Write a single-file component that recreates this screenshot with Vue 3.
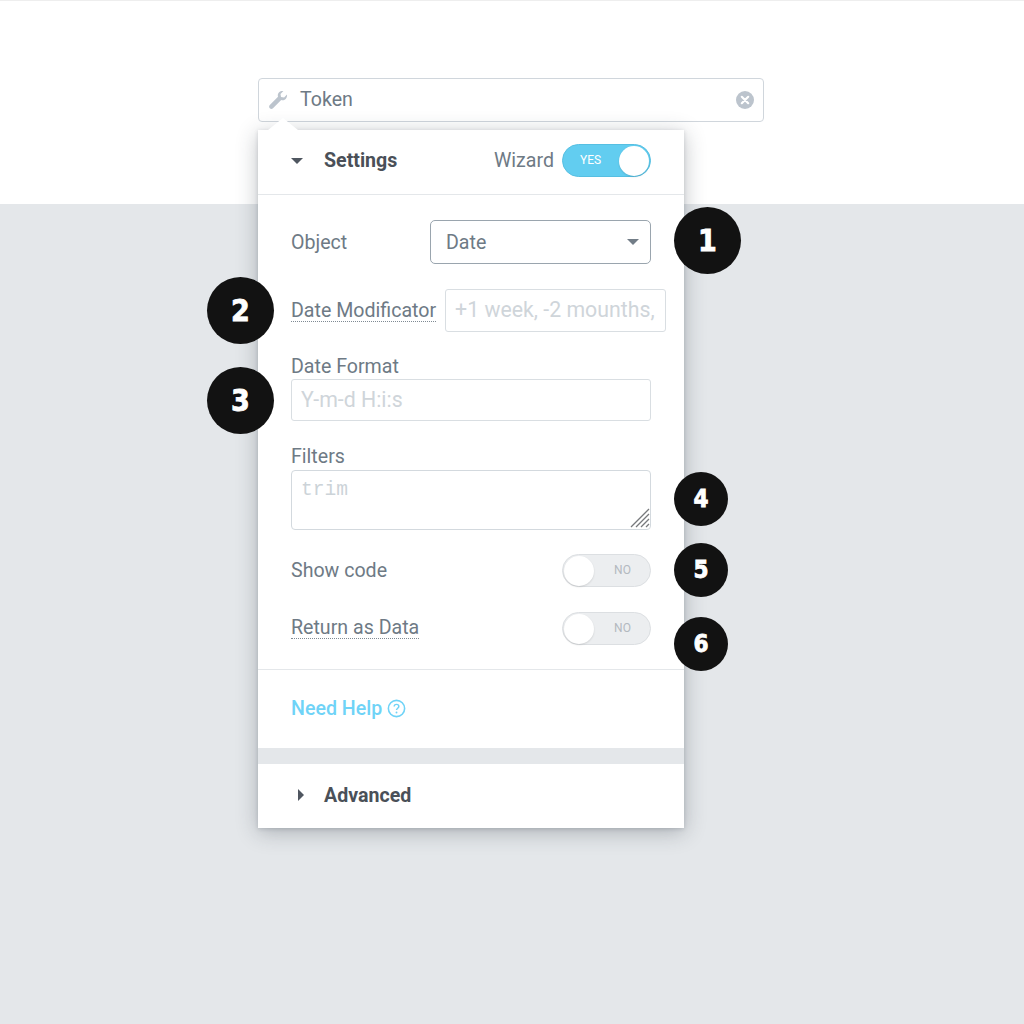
<script setup>
const badges = [
  { n: 1, cls: 'big b1' },
  { n: 2, cls: 'big b2' },
  { n: 3, cls: 'big b3' },
  { n: 4, cls: 'small b4' },
  { n: 5, cls: 'small b5' },
  { n: 6, cls: 'small b6' }
]
</script>

<template>
  <div class="stage">
    <div class="token">
      <svg class="wrench" width="20" height="20" viewBox="0 0 20 20">
        <path d="M19 4.600c.3 1.600-.2 3.200-1.300 4.300-1.200 1.200-2.900 1.600-4.500 1.100L5 18.200c-.9.900-2.300.900-3.200 0s-.9-2.300 0-3.200L10 6.800C9.500 5.200 9.900 3.500 11.100 2.300 12.200 1.200 13.800.7 15.400 1L12.500 3.900l.5 3.100 3.100.5L19 4.600z" fill="#bcc4cd" />
      </svg>
      <span class="token-name">Token</span>
      <svg class="clear" width="18" height="18" viewBox="0 0 18 18">
        <circle cx="9" cy="9" r="9" fill="#bcc4cd" />
        <path d="M5.800 5.800l6.400 6.400M12.200 5.800l-6.400 6.400" stroke="#fff" stroke-width="2.200" stroke-linecap="round" />
      </svg>
    </div>

    <div class="panel">
      <span class="notch"></span>

      <div class="head">
        <span class="caret-down"></span>
        <span class="title">Settings</span>
        <span class="wizard">Wizard</span>
        <div class="toggle on">
          <span class="toggle-text">YES</span>
          <span class="knob"></span>
        </div>
      </div>

      <div class="body">
        <div class="row object-row">
          <span class="label">Object</span>
          <div class="select">
            <span>Date</span>
            <span class="select-caret"></span>
          </div>
        </div>

        <div class="row modif-row">
          <span class="label dotted">Date Modificator</span>
          <input class="input modif" placeholder="+1 week, -2 mounths," />
        </div>

        <div class="stack format">
          <span class="label">Date Format</span>
          <input class="input" placeholder="Y-m-d H:i:s" />
        </div>

        <div class="stack filters">
          <span class="label">Filters</span>
          <div class="area-wrap">
            <textarea class="area" placeholder="trim"></textarea>
            <svg class="grip" width="20" height="20" viewBox="0 0 20 20">
              <path d="M1 19L19 1M6 19L19 6M11 19l8-8M16 19l3-3" stroke="#77797c" stroke-width="1.300" fill="none" />
            </svg>
          </div>
        </div>

        <div class="row switch-row code">
          <span class="label">Show code</span>
          <div class="toggle">
            <span class="knob"></span>
            <span class="toggle-text">NO</span>
          </div>
        </div>

        <div class="row switch-row data">
          <span class="label dotted">Return as Data</span>
          <div class="toggle">
            <span class="knob"></span>
            <span class="toggle-text">NO</span>
          </div>
        </div>
      </div>

      <div class="help">
        <span>Need Help</span>
        <svg width="19" height="19" viewBox="0 0 18 18">
          <circle cx="9" cy="9" r="7.700" fill="none" stroke="#6fd3f7" stroke-width="1.500" />
          <path d="M6.800 7.200c0-1.300 1-2.100 2.200-2.100s2.200.8 2.200 2c0 1.700-2.200 1.700-2.200 3.400" fill="none" stroke="#6fd3f7" stroke-width="1.400" />
          <circle cx="9" cy="12.800" r=".9" fill="#6fd3f7" />
        </svg>
      </div>

      <div class="advanced">
        <span class="caret-right"></span>
        <span class="title">Advanced</span>
      </div>
    </div>

    <span v-for="b in badges" :key="b.n" class="badge" :class="b.cls">{{ b.n }}</span>
  </div>
</template>

<style>
  body {
    margin: 0;
    background: #e4e7ea;
  }
</style>

<style scoped>
  .stage {
    position: relative;
    box-sizing: border-box;
    height: 1024px;
    padding: 78px 0 0 258px;
    background: linear-gradient(#eee 1px, #fff 1px, #fff 204px, #e4e7ea 204px);
    font-family: Roboto, sans-serif;
    font-size: 19.600px;
    color: #6e7a85;
    overflow: hidden;
  }

  .token {
    box-sizing: border-box;
    width: 506px;
    height: 44px;
    padding: 0 9px 1px;
    display: flex;
    align-items: center;
    border: 1px solid #d0d6dc;
    border-radius: 4px;
    background: #fff;
  }

  .wrench {
    flex: none;
  }

  .token-name {
    margin-left: 12px;
    color: #6e7a85;
  }

  .clear {
    margin-left: auto;
  }

  .panel {
    position: relative;
    width: 426px;
    margin-top: 8px;
    background: #fff;
    box-shadow: 0 4px 20px rgba(40, 50, 60, 0.3), 0 1px 4px rgba(40, 50, 60, 0.16);
  }

  .notch {
    position: absolute;
    left: 10px;
    top: -12px;
    width: 0;
    height: 0;
    border-left: 15px solid transparent;
    border-right: 15px solid transparent;
    border-bottom: 12px solid #fff;
  }

  .head {
    box-sizing: border-box;
    height: 65px;
    padding: 0 33px 3px;
    display: flex;
    align-items: center;
    border-bottom: 1px solid #e4e7ea;
  }

  .caret-down {
    width: 0;
    height: 0;
    border-left: 6px solid transparent;
    border-right: 6px solid transparent;
    border-top: 6px solid #4f5660;
  }

  .title {
    margin-left: 21px;
    font-weight: 700;
    color: #4a5058;
  }

  .wizard {
    margin-left: auto;
    margin-right: 8px;
  }

  .toggle {
    box-sizing: border-box;
    width: 89px;
    height: 33px;
    padding: 0 1px;
    display: flex;
    align-items: center;
    justify-content: space-between;
    border: 1px solid #dcdfe2;
    border-radius: 17px;
    background: #eceef0;
  }

  .toggle.on {
    border-color: #56bfe2;
    background: #62cdf0;
  }

  .toggle-text {
    width: 53px;
    padding-bottom: 2px;
    text-align: center;
    font-size: 12px;
    color: #b3b9bf;
  }

  .toggle.on .toggle-text {
    color: #fff;
  }

  .knob {
    flex: none;
    width: 30px;
    height: 30px;
    border-radius: 50%;
    background: #fff;
    box-shadow: 0 1px 2px rgba(0, 0, 0, 0.12);
  }

  .body {
    box-sizing: border-box;
    height: 475px;
    padding: 25px 33px 0;
    border-bottom: 1px solid #e4e7ea;
  }

  .row {
    display: flex;
    align-items: center;
    justify-content: space-between;
  }

  .select {
    box-sizing: border-box;
    width: 221px;
    height: 44px;
    padding: 0 11px 0 15px;
    display: flex;
    align-items: center;
    justify-content: space-between;
    border: 1px solid #9aa5ae;
    border-radius: 5px;
  }

  .select-caret {
    width: 0;
    height: 0;
    border-left: 6.500px solid transparent;
    border-right: 6.500px solid transparent;
    border-top: 6.500px solid #727d87;
  }

  .label {
    white-space: nowrap;
  }

  .label.dotted {
    border-bottom: 1px dotted #7f8a93;
    line-height: 20px;
  }

  .modif-row {
    margin-top: 25px;
    justify-content: flex-start;
    gap: 9px;
  }

  .modif-row .label {
    margin-top: 2px;
  }

  .input {
    box-sizing: border-box;
    width: 100%;
    height: 43px;
    padding: 0 9px;
    border: 1px solid #d9dee2;
    border-radius: 3px;
    outline: none;
    font: inherit;
    color: inherit;
  }

  .input::placeholder {
    font-size: 21.300px;
    color: #cfd5da;
    opacity: 1;
  }

  .modif {
    flex: none;
    width: 221px;
    height: 43px;
  }

  .stack {
    display: flex;
    flex-direction: column;
  }

  .format {
    margin-top: 23px;
    gap: 1px;
  }

  .format .input {
    height: 42px;
  }

  .filters {
    margin-top: 24px;
    gap: 2px;
  }

  .area-wrap {
    position: relative;
    height: 60px;
  }

  .area {
    display: block;
    box-sizing: border-box;
    width: 100%;
    height: 60px;
    padding: 8px 9px;
    border: 1px solid #d3d9de;
    border-radius: 4px;
    outline: none;
    resize: none;
    font-family: "Liberation Mono", monospace;
    font-size: 19.600px;
  }

  .area::placeholder {
    color: #ccd3d8;
    opacity: 1;
  }

  .grip {
    position: absolute;
    right: 1px;
    bottom: 2px;
  }

  .switch-row.code {
    margin-top: 24px;
  }

  .switch-row.data {
    margin-top: 25px;
  }

  .help {
    box-sizing: border-box;
    height: 94px;
    padding: 0 0 2px 33px;
    display: flex;
    align-items: center;
    gap: 5px;
    font-weight: 500;
    color: #6fd3f7;
    border-bottom: 16px solid #e4e7ea;
  }

  .advanced {
    box-sizing: border-box;
    height: 64px;
    padding: 0 0 2px 40px;
    display: flex;
    align-items: center;
  }

  .caret-right {
    width: 0;
    height: 0;
    border-top: 6px solid transparent;
    border-bottom: 6px solid transparent;
    border-left: 6px solid #4f5660;
  }

  .advanced .title {
    margin-left: 20px;
  }

  .badge {
    position: absolute;
    display: flex;
    align-items: center;
    justify-content: center;
    border-radius: 50%;
    background: #121212;
    color: #fff;
    font-family: "DejaVu Sans Condensed", "DejaVu Sans", sans-serif;
    font-stretch: condensed;
    font-weight: 700;
    -webkit-text-stroke: 0.8px #fff;
  }

  .big {
    width: 67px;
    height: 67px;
    font-size: 30px;
  }

  .small {
    width: 54px;
    height: 54px;
    font-size: 24px;
  }

  .b1 { left: 674px; top: 207px; }
  .b2 { left: 207px; top: 277px; }
  .b3 { left: 207px; top: 367px; }
  .b4 { left: 674px; top: 472px; }
  .b5 { left: 674px; top: 543px; }
  .b6 { left: 674px; top: 617px; }
</style>
